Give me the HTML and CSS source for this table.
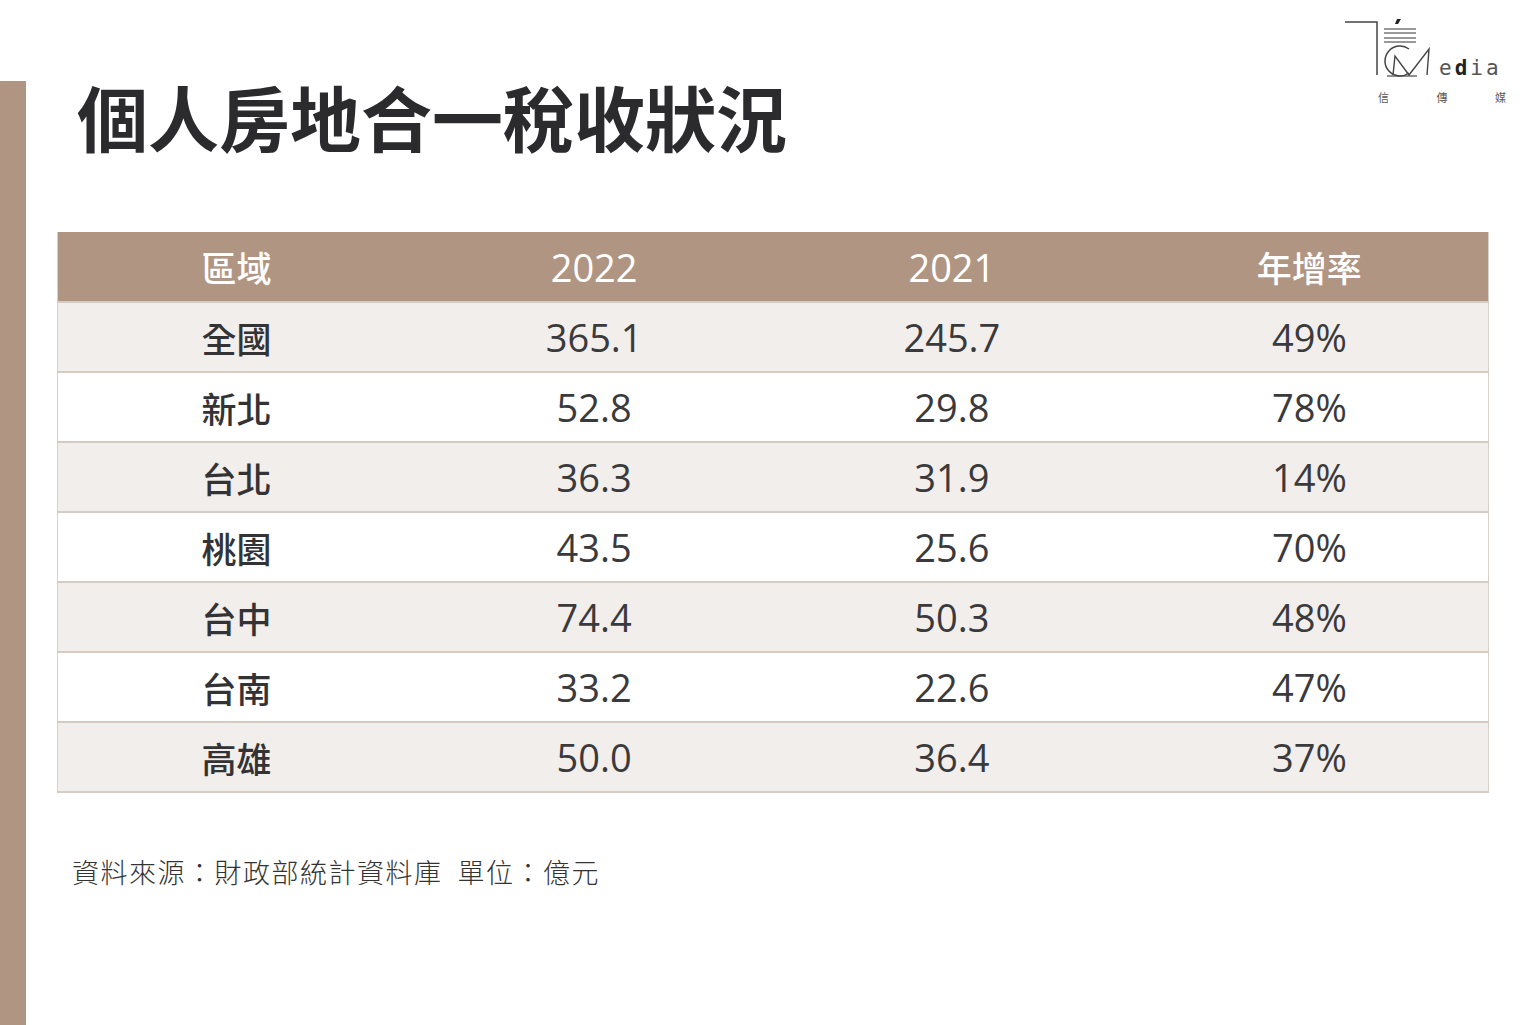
FILE: index.html
```html
<!DOCTYPE html>
<html lang="zh-Hant">
<head>
<meta charset="utf-8">
<title>個人房地合一稅收狀況</title>
<link rel="stylesheet" href="styles.css">
</head>
<body>
<div class="page">
  <div class="side-bar"></div>
  <main class="content">
    <header class="header">
      <h1 class="title">個人房地合一稅收狀況</h1>
      <div class="logo">
        <svg class="logo-mark" width="160" height="62" viewBox="0 0 160 62">
          <polyline points="2,3 34,3 34,56" fill="none" stroke="#444" stroke-width="1.5"/>
          <path d="M54,0 L58,0 L55,5 L52,5 Z" fill="#222"/>
          <line x1="41" y1="10" x2="73" y2="10" stroke="#555" stroke-width="1.2"/>
          <line x1="41" y1="14" x2="73" y2="14" stroke="#555" stroke-width="1.2"/>
          <line x1="41" y1="19" x2="73" y2="19" stroke="#555" stroke-width="1.2"/>
          <line x1="41" y1="23" x2="73" y2="23" stroke="#555" stroke-width="1.2"/>
          <path d="M66,30 A15,15 0 1 0 66,54" fill="none" stroke="#444" stroke-width="1.5"/>
          <polyline points="50,56 52,37 66,56 86,30 84,56" fill="none" stroke="#444" stroke-width="1.4"/>
          <line x1="44" y1="57" x2="74" y2="57" stroke="#444" stroke-width="1.2"/>
        </svg>
        <span class="logo-word">e<span class="logo-d">d</span>ia</span>
        <div class="logo-cn"><span>信</span><span>傳</span><span>媒</span></div>
      </div>
    </header>

    <table class="tax-table">
      <thead>
        <tr><th class="cjk">區域</th><th>2022</th><th>2021</th><th class="cjk">年增率</th></tr>
      </thead>
      <tbody>
        <tr><td class="region">全國</td><td>365.1</td><td>245.7</td><td>49%</td></tr>
        <tr><td class="region">新北</td><td>52.8</td><td>29.8</td><td>78%</td></tr>
        <tr><td class="region">台北</td><td>36.3</td><td>31.9</td><td>14%</td></tr>
        <tr><td class="region">桃園</td><td>43.5</td><td>25.6</td><td>70%</td></tr>
        <tr><td class="region">台中</td><td>74.4</td><td>50.3</td><td>48%</td></tr>
        <tr><td class="region">台南</td><td>33.2</td><td>22.6</td><td>47%</td></tr>
        <tr><td class="region">高雄</td><td>50.0</td><td>36.4</td><td>37%</td></tr>
      </tbody>
    </table>

    <p class="source">資料來源：財政部統計資料庫&nbsp;&nbsp;單位：億元</p>
  </main>
</div>
</body>
</html>
```

FILE: styles.css
```css
* { box-sizing: border-box; }
html, body { margin: 0; padding: 0; background: #ffffff; }
body {
  width: 1536px;
  height: 1025px;
  overflow: hidden;
  font-family: "Open Sans", "Noto Sans CJK TC", sans-serif;
  color: #333;
}
.page {
  display: flex;
  height: 1025px;
}
.side-bar {
  width: 26px;
  flex: 0 0 26px;
  margin-top: 81px;
  background: #b09682;
}
.content {
  flex: 1;
  display: flex;
  flex-direction: column;
}
.header {
  display: flex;
  justify-content: space-between;
  align-items: flex-start;
  height: 232px;
}
.title {
  margin: 80px 0 0 51px;
  font-family: "Noto Sans CJK TC", sans-serif;
  font-weight: 700;
  font-size: 71px;
  line-height: 1;
  color: #2b2b2e;
}
.logo {
  position: relative;
  width: 165px;
  margin: 19px 28px 0 0;
  display: flex;
  flex-wrap: wrap;
  align-items: flex-end;
}
.logo-mark { display: block; }
.logo-word {
  position: absolute;
  left: 96px;
  top: 39px;
  font-family: "DejaVu Sans Mono", monospace;
  font-size: 21px;
  line-height: 1;
  letter-spacing: 3px;
  color: #555;
}
.logo-d { font-weight: 700; color: #222; }
.logo-cn {
  width: 100%;
  display: flex;
  justify-content: space-between;
  padding: 8px 2px 0 35px;
  font-family: "Noto Sans CJK TC", serif;
  font-size: 11px;
  color: #555;
}
.tax-table {
  margin-left: 31px;
  width: 1432px;
  border-collapse: collapse;
  table-layout: fixed;
  border-left: 1px solid #d8d2cd;
  border-right: 1px solid #d8d2cd;
}
.tax-table th,
.tax-table td {
  height: 70px;
  padding: 0;
  text-align: center;
  vertical-align: middle;
  font-size: 38px;
  line-height: 1;
}
.tax-table th {
  background: #b09682;
  color: #ffffff;
  font-weight: 500;
}
.tax-table th.cjk {
  font-family: "Noto Sans CJK TC", sans-serif;
  font-size: 35px;
}
.tax-table td {
  color: #3a3a3d;
  border-top: 2px solid #d5cbc3;
}
.tax-table tbody tr:last-child td { border-bottom: 2px solid #d5cbc3; }
.tax-table tbody tr:nth-child(odd) td { background: #f2eeeb; }
.tax-table tbody tr:nth-child(even) td { background: #ffffff; }
.tax-table td.region {
  font-family: "Noto Sans CJK TC", sans-serif;
  font-weight: 500;
  font-size: 35px;
  color: #333336;
}
.source {
  margin: 59px 0 0 46px;
  font-family: "Noto Sans CJK TC", sans-serif;
  font-weight: 300;
  font-size: 27px;
  letter-spacing: 1.5px;
  color: #333;
}
```
